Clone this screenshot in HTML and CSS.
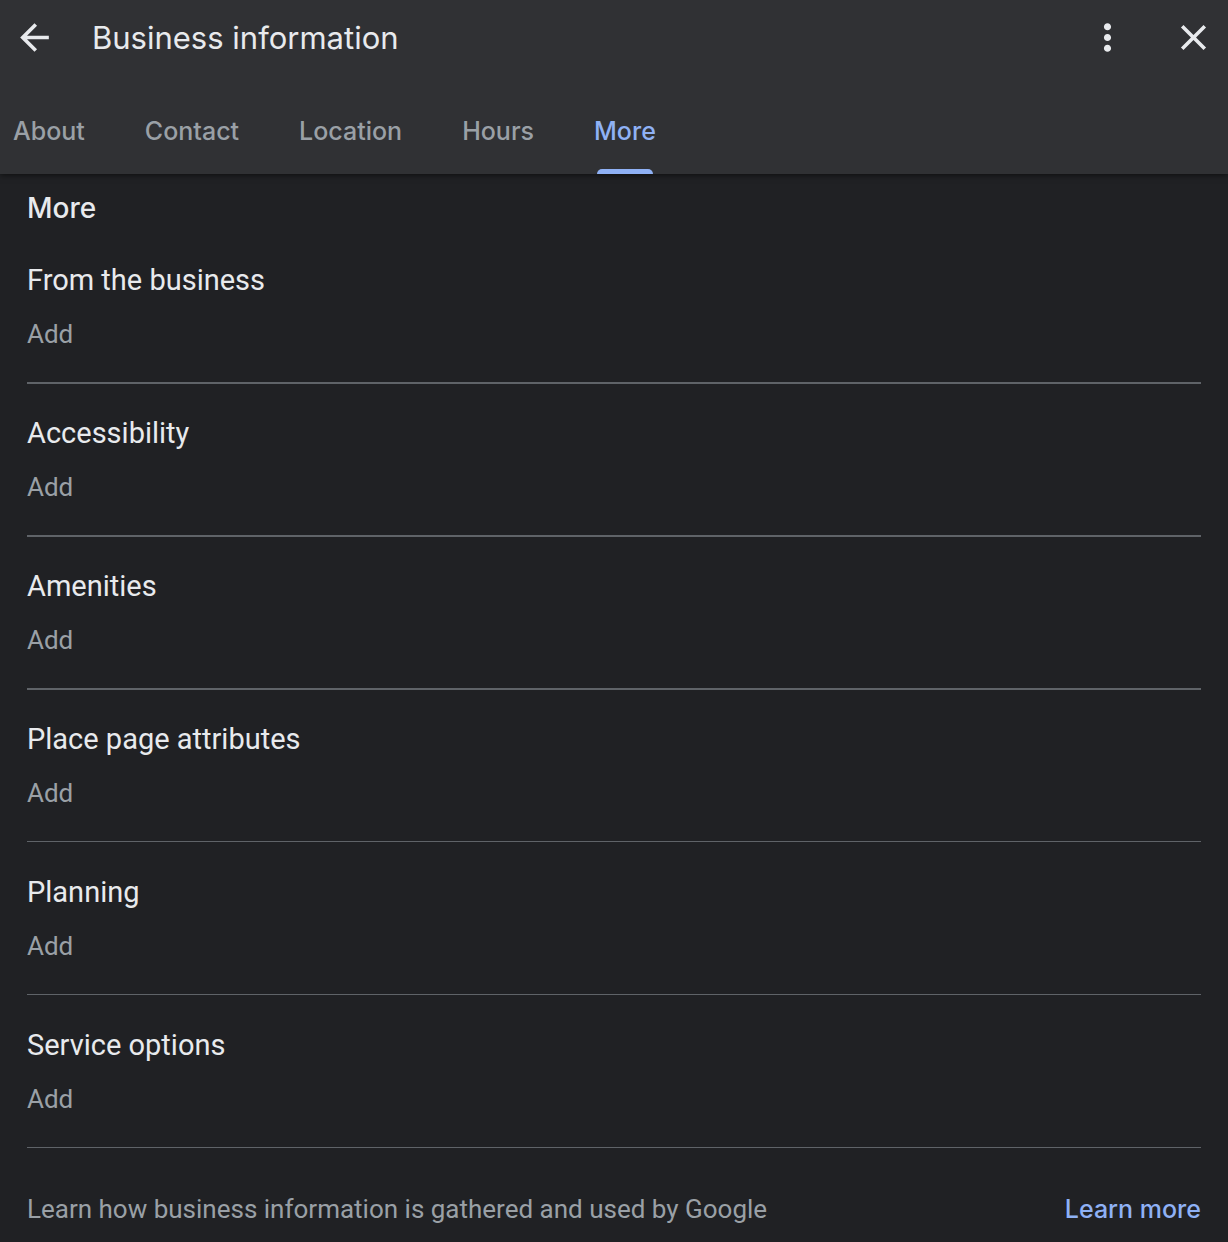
FILE: index.html
```html
<!DOCTYPE html>
<html lang="en">
<head>
    <meta charset="UTF-8">
    <meta name="viewport" content="width=device-width, initial-scale=1.0">
    <title>Business information</title>
    <link rel="stylesheet" href="styles.css">
</head>
<body>
    <header class="header">
        <div class="title-bar">
            <button type="button" class="icon-button" aria-label="Back">
                <svg width="43" height="43" viewBox="0 0 24 24"><path d="M20 11H7.830l5.590-5.590L12 4l-8 8 8 8 1.410-1.410L7.830 13H20v-2z"/></svg>
            </button>
            <h1>Business information</h1>
            <button type="button" class="icon-button" aria-label="More options">
                <svg width="43" height="43" viewBox="0 0 24 24"><path d="M12 8c1.100 0 2-.9 2-2s-.9-2-2-2-2 .9-2 2 .9 2 2 2zm0 2c-1.100 0-2 .9-2 2s.9 2 2 2 2-.9 2-2-.9-2-2-2zm0 6c-1.100 0-2 .9-2 2s.9 2 2 2 2-.9 2-2-.9-2-2-2z"/></svg>
            </button>
            <button type="button" class="icon-button" aria-label="Close">
                <svg width="43" height="43" viewBox="0 0 24 24"><path d="M19 6.410L17.590 5 12 10.590 6.410 5 5 6.410 10.590 12 5 17.590 6.410 19 12 13.410 17.590 19 19 17.590 13.410 12z"/></svg>
            </button>
        </div>
        <nav class="tabs">
            <a href="#about">About</a>
            <a href="#contact">Contact</a>
            <a href="#location">Location</a>
            <a href="#hours">Hours</a>
            <a href="#more" class="active" aria-current="page">More</a>
        </nav>
    </header>
    <main id="more">
        <h2>More</h2>
        <section class="item">
            <h3>From the business</h3>
            <button type="button" class="add">Add</button>
        </section>
        <section class="item">
            <h3>Accessibility</h3>
            <button type="button" class="add">Add</button>
        </section>
        <section class="item">
            <h3>Amenities</h3>
            <button type="button" class="add">Add</button>
        </section>
        <section class="item">
            <h3>Place page attributes</h3>
            <button type="button" class="add">Add</button>
        </section>
        <section class="item thin">
            <h3>Planning</h3>
            <button type="button" class="add">Add</button>
        </section>
        <section class="item thin">
            <h3>Service options</h3>
            <button type="button" class="add">Add</button>
        </section>
    </main>
    <footer class="footer">
        <p>Learn how business information is gathered and used by Google</p>
        <a href="#learn-more">Learn more</a>
    </footer>
</body>
</html>
```
FILE: styles.css
```css
* {
    box-sizing: border-box;
}
body {
    margin: 0;
    font-family: Roboto, Arial, sans-serif;
    background-color: #202124;
    color: #e8eaed;
}
h1, h2, h3, p {
    margin: 0;
    font-weight: 400;
}
button {
    padding: 0;
    border: none;
    background: none;
    font-family: inherit;
    cursor: pointer;
}
a {
    text-decoration: none;
}
.header {
    background-color: #303134;
    box-shadow: 0 1px 6px rgba(0, 0, 0, 0.6);
}
.title-bar {
    display: flex;
    align-items: center;
    height: 75px;
    padding: 0 13px;
}
.title-bar h1 {
    flex: 1;
    margin-left: 36px;
    font-family: Inter, sans-serif;
    font-size: 31px;
    line-height: 40px;
}
.icon-button {
    display: flex;
    fill: #e8eaed;
}
.icon-button + .icon-button {
    margin-left: 43px;
}
.tabs {
    display: flex;
    gap: 60px;
    padding: 0 13px;
}
.tabs a {
    position: relative;
    padding: 40px 0 27px;
    font-family: Inter, sans-serif;
    font-size: 25px;
    font-weight: 500;
    line-height: 32px;
    color: #9aa0a6;
}
.tabs .active {
    color: #8fb1f5;
}
.tabs .active::after {
    content: "";
    position: absolute;
    left: 3px;
    right: 3px;
    bottom: 0;
    height: 5px;
    border-radius: 5px 5px 0 0;
    background-color: #8fb1f5;
}
main {
    padding: 16px 27px 0;
}
h2 {
    margin-bottom: 3px;
    font-family: Inter, sans-serif;
    font-size: 28px;
    font-weight: 500;
    line-height: 36px;
}
.item {
    padding: 33px 0 32px;
}
/* dividers are drawn inside the row so they take no height */
.item + .item {
    box-shadow: inset 0 2px #5f6368;
}
.item + .thin {
    box-shadow: inset 0 1px #5f6368;
}
.item h3 {
    margin-bottom: 20px;
    font-size: 29px;
    line-height: 36px;
}
.add {
    display: block;
    font-size: 26px;
    line-height: 32px;
    color: #9aa0a6;
}
.footer {
    display: flex;
    justify-content: space-between;
    margin: 0 27px;
    padding: 46px 0 17px;
    box-shadow: inset 0 1px #5f6368;
    font-size: 26px;
    line-height: 32px;
    color: #9aa0a6;
}
.footer a {
    font-family: Inter, sans-serif;
    font-size: 25px;
    font-weight: 500;
    color: #8fb1f5;
}
```
